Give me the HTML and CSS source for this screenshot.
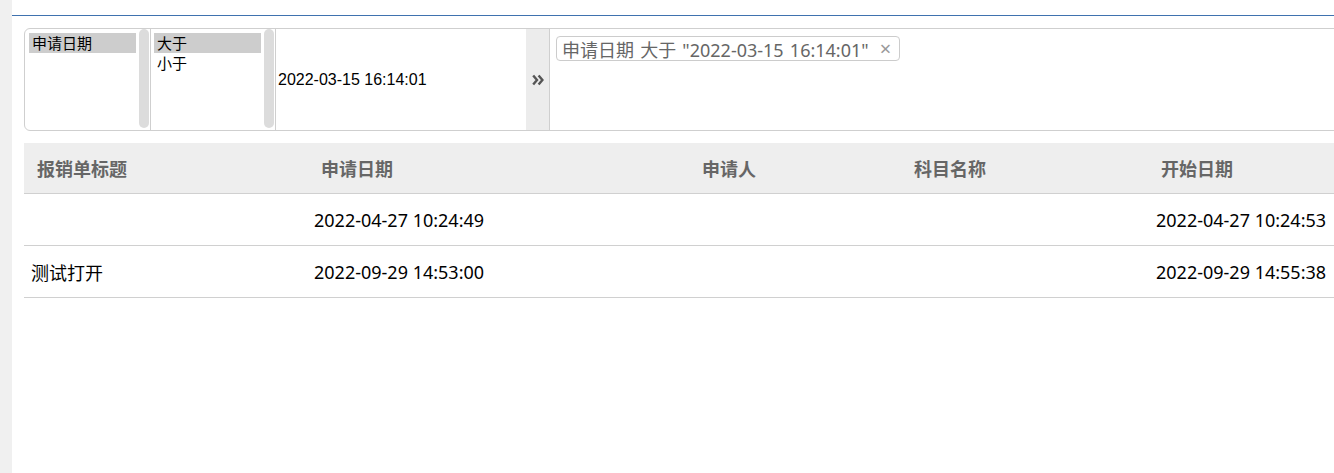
FILE: index.html
```html
<!DOCTYPE html>
<html lang="zh">
<head>
<meta charset="utf-8">
<title>报销单</title>
<link rel="stylesheet" href="styles.css">
</head>
<body>
<div class="page">
  <aside class="strip"></aside>
  <main class="main">
    <div class="topline"></div>
    <div class="content">
      <section class="panel">
        <div class="list list-a">
          <ul class="items">
            <li class="sel">申请日期</li>
          </ul>
          <div class="scroll"></div>
        </div>
        <div class="list list-b">
          <ul class="items">
            <li class="sel">大于</li>
            <li>小于</li>
          </ul>
          <div class="scroll"></div>
        </div>
        <div class="value">2022-03-15 16:14:01</div>
        <button class="add" type="button">
          <svg width="12" height="12" viewBox="0 0 12 12"><path d="M1.2 1.5 L5 6 L1.2 10.5 M6.6 1.5 L10.4 6 L6.6 10.5" fill="none" stroke="#555" stroke-width="2.4" stroke-linejoin="miter"/></svg>
        </button>
        <div class="tags">
          <span class="tag">申请日期 大于 "2022-03-15 16:14:01"<span class="x">×</span></span>
        </div>
      </section>

      <div class="table">
        <div class="row head">
          <div class="c c1">报销单标题</div>
          <div class="c c2">申请日期</div>
          <div class="c c3">申请人</div>
          <div class="c c4">科目名称</div>
          <div class="c c5">开始日期</div>
        </div>
        <div class="row">
          <div class="c c1"></div>
          <div class="c c2">2022-04-27 10:24:49</div>
          <div class="c c3"></div>
          <div class="c c4"></div>
          <div class="c c5">2022-04-27 10:24:53</div>
        </div>
        <div class="row">
          <div class="c c1">测试打开</div>
          <div class="c c2">2022-09-29 14:53:00</div>
          <div class="c c3"></div>
          <div class="c c4"></div>
          <div class="c c5">2022-09-29 14:55:38</div>
        </div>
      </div>
    </div>
  </main>
</div>
</body>
</html>
```

FILE: styles.css
```css
html, body {
  margin: 0;
  padding: 0;
  background: #fff;
  overflow: hidden;
}
body {
  width: 1334px;
  height: 473px;
  font-family: "Noto Sans", "Noto Sans CJK SC", sans-serif;
  color: #000;
}
.page {
  display: flex;
  height: 473px;
}
.strip {
  width: 12px;
  flex: 0 0 12px;
  background: #f0f0f0;
}
.main {
  flex: 1;
  min-width: 0;
}
.topline {
  margin-top: 15px;
  height: 1px;
  background: #3f72af;
}
.content {
  padding: 12px 0 0 12px;
}
.panel {
  display: flex;
  height: 101px;
  width: 1340px;
  border: 1px solid #cfcfcf;
  border-radius: 6px;
  box-sizing: content-box;
}
.list {
  display: flex;
  border-right: 1px solid #cfcfcf;
  padding: 0 1px 0 4px;
}
.list-b {
  padding-left: 3px;
}
.items {
  list-style: none;
  margin: 0;
  padding: 4px 0 0 0;
  width: 107px;
  font-family: "Noto Sans CJK SC", sans-serif;
  font-size: 15px;
}
.items li {
  height: 20px;
  line-height: 20px;
  padding-left: 3px;
}
.items li.sel {
  background: #cdcdcd;
}
.scroll {
  width: 10px;
  height: 99px;
  margin-left: 3px;
  border-radius: 5px;
  background: #dcdcdc;
}
.value {
  width: 248px;
  padding-left: 2px;
  display: flex;
  align-items: center;
  font-family: "Liberation Sans", Arial, sans-serif;
  font-size: 16px;
}
.add {
  width: 24px;
  margin: 0;
  padding: 0;
  border: 0;
  border-right: 1px solid #cfcfcf;
  background: #ececec;
  display: flex;
  align-items: center;
  justify-content: center;
  box-sizing: border-box;
}
.add svg {
  display: block;
}
.tags {
  flex: 1;
  padding: 7px 0 0 6px;
}
.tag {
  display: inline-flex;
  align-items: center;
  height: 25px;
  box-sizing: border-box;
  border: 1px solid #cccccc;
  border-radius: 4px;
  padding: 0 8px 0 5px;
  font-size: 18px;
  color: #666;
  white-space: nowrap;
  word-spacing: 1.5px;
}
.tag .x {
  margin-left: 11px;
  color: #999;
  font-size: 20px;
  line-height: 1;
}
.table {
  margin-top: 12px;
  width: 1330px;
  font-size: 18px;
}
.row {
  display: grid;
  grid-template-columns: 283px 383px 211px 248px 1fr;
  height: 51px;
  border-bottom: 1px solid #d0d0d0;
  align-items: center;
  white-space: nowrap;
}
.row.head {
  height: 50px;
  background: #eeeeee;
  font-weight: bold;
  color: #666;
}
.c {
  padding-left: 7px;
}
.head .c1 { padding-left: 13px; }
.head .c2 { padding-left: 14px; }
.head .c3 { padding-left: 12px; }
.head .c4 { padding-left: 13px; }
.head .c5 { padding-left: 12px; }
```
